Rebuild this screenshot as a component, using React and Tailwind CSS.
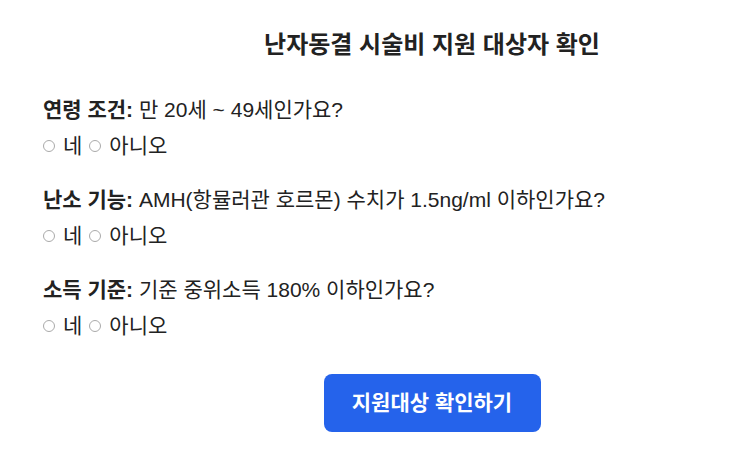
import React from "react";

const questions = [
  { label: "연령 조건:", text: "만 20세 ~ 49세인가요?" },
  { label: "난소 기능:", text: "AMH(항뮬러관 호르몬) 수치가 1.5ng/ml 이하인가요?" },
  { label: "소득 기준:", text: "기준 중위소득 180% 이하인가요?" },
];

const Question = ({ label, text }) => {
  return (
    <div className="mb-[26px]">
      <p className="text-[21px] leading-[28px] text-[#222]">
        <span className="font-bold">{label}</span> {text}
      </p>
      <div className="flex items-center mt-[8px] text-[21px] leading-[28px] text-[#222]">
        <label className="flex items-center">
          <span className="inline-block w-[12px] h-[12px] rounded-full border border-[#aaa] mr-[8px]"></span>
          네
        </label>
        <label className="flex items-center ml-[7px]">
          <span className="inline-block w-[12px] h-[12px] rounded-full border border-[#aaa] mr-[8px]"></span>
          아니오
        </label>
      </div>
    </div>
  );
};

export default function App() {
  return (
    <div
      className="min-h-screen bg-white pt-[30px] px-[43px]"
      style={{ fontFamily: '"Liberation Sans", "Noto Sans CJK KR", sans-serif' }}
    >
      <h1 className="text-[24px] leading-[30px] font-bold text-[#222] text-center pl-[121px] mb-[36px]">
        난자동결 시술비 지원 대상자 확인
      </h1>
      {questions.map((q, i) => (
        <Question key={i} label={q.label} text={q.text} />
      ))}
      <div className="flex justify-center pl-[121px] mt-[34px]">
        <button className="w-[217px] h-[58px] rounded-[8px] bg-[#2563eb] text-white text-[21px] font-bold">
          지원대상 확인하기
        </button>
      </div>
    </div>
  );
}
